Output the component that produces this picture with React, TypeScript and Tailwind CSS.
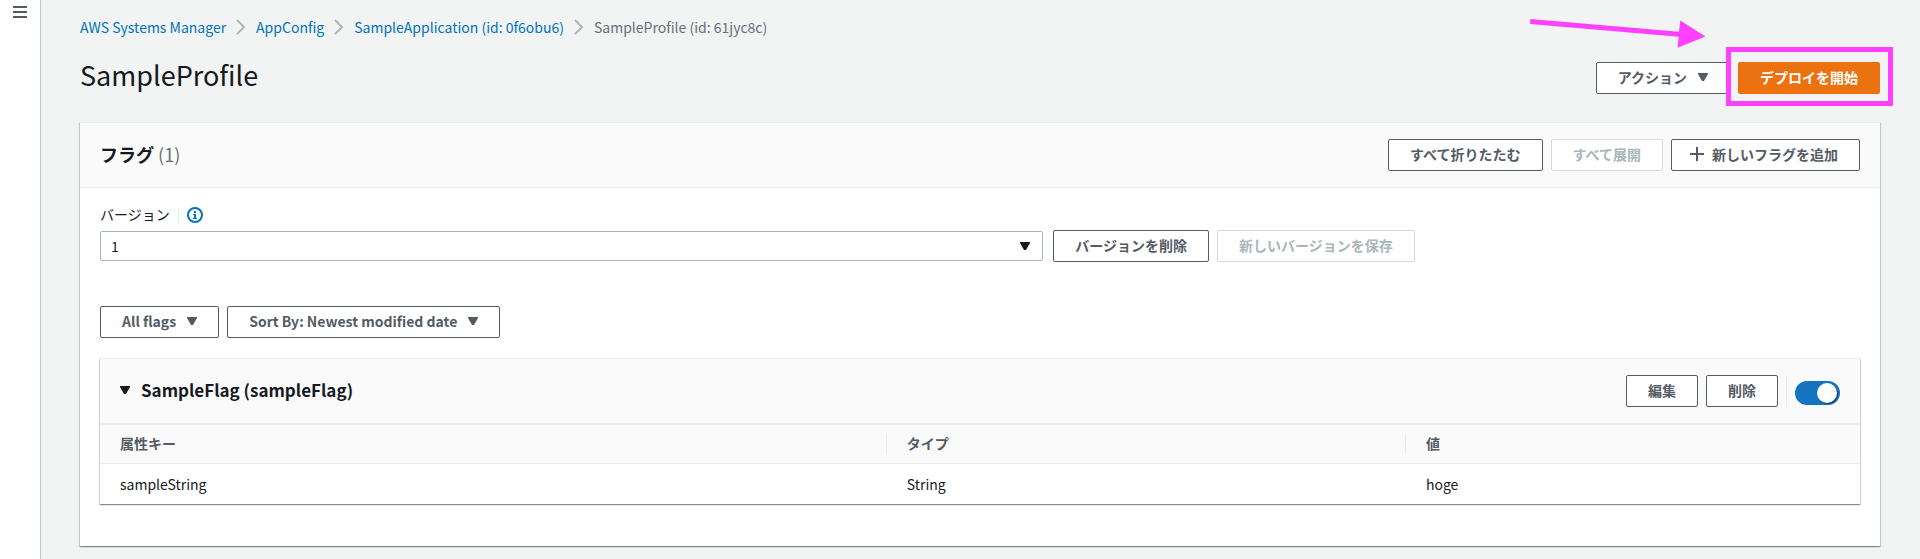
import { useState } from "react";
import type { ButtonHTMLAttributes, ReactNode } from "react";

type ActionButtonProps = ButtonHTMLAttributes<HTMLButtonElement> & {
  children: ReactNode;
  caret?: boolean;
};

function Caret() {
  return (
    <svg className="h-2 w-[10px] shrink-0" viewBox="0 0 10 8" fill="currentColor" aria-hidden="true">
      <path d="M0 0h10v1L6 8H4L0 1z" />
    </svg>
  );
}

function ActionButton({ children, caret, ...rest }: ActionButtonProps) {
  return (
    <button
      type="button"
      className="flex h-8 shrink-0 items-center gap-[11px] rounded-xs border border-[#545b64] bg-white px-[21px] pb-[2px] text-sm font-bold whitespace-nowrap text-[#545b64] disabled:border-[#d5dbdb] disabled:text-[#aab7b8]"
      {...rest}
    >
      {children}
      {caret && <Caret />}
    </button>
  );
}

function Separator() {
  return (
    <svg className="mx-[10px] h-4 w-[10px]" viewBox="0 0 10 16" fill="none" stroke="#aab7b8" strokeWidth="2" aria-hidden="true">
      <path d="M1 1l7 7-7 7" />
    </svg>
  );
}

const crumbs = ["AWS Systems Manager", "AppConfig", "SampleApplication (id: 0f6obu6)"];

const attributes = [{ key: "sampleString", type: "String", value: "hoge" }];

const cardShadow =
  "border-t border-[#eaeded] bg-white shadow-[0_1px_1px_0_rgba(0,28,36,0.3),1px_1px_1px_0_rgba(0,28,36,0.15),-1px_1px_1px_0_rgba(0,28,36,0.15)]";

export default function App() {
  const [enabled, setEnabled] = useState(true);

  return (
    <div className="flex min-h-screen bg-[#f2f3f3] font-['Noto_Sans_CJK_JP',sans-serif] text-sm text-[#16191f]">
      <aside className="w-[41px] shrink-0 border-r border-[#c3c8c8] bg-white">
        <button type="button" aria-label="メニュー" className="flex w-full justify-center pt-[5px] text-[#545b64]">
          <svg className="h-[14px] w-[14px]" viewBox="0 0 14 14" stroke="currentColor" strokeWidth="2" aria-hidden="true">
            <path d="M0 2h14M0 7h14M0 12h14" />
          </svg>
        </button>
      </aside>

      <main className="min-w-0 flex-1 pt-4 pr-10 pl-[39px]">
        <nav aria-label="パンくずリスト" className="flex h-[22px] items-center text-[#687078]">
          {crumbs.map((crumb) => (
            <div key={crumb} className="flex items-center">
              <a href="#" className="text-[#0073bb]">{crumb}</a>
              <Separator />
            </div>
          ))}
          <span>SampleProfile (id: 61jyc8c)</span>
        </nav>

        <header className="flex items-start justify-between pt-5 pb-7">
          <h1 className="text-[27px] leading-[34px]">SampleProfile</h1>
          <div className="flex gap-2 pt-1">
            <ActionButton caret>アクション</ActionButton>
            <div className="relative">
              <button
                type="button"
                className="h-8 rounded-xs bg-[#ec7211] px-[22px] pb-[2px] text-sm font-bold text-white"
              >
                デプロイを開始
              </button>
              <div className="pointer-events-none absolute -top-[15px] -right-[13px] -bottom-3 -left-3 border-[5px] border-[#ff40ff]" />
              <svg
                className="pointer-events-none absolute -top-[46px] right-[170px] h-9 w-[184px]"
                viewBox="0 0 184 36"
                fill="#ff40ff"
                aria-hidden="true"
              >
                <path d="M4.300 3L153 15.800L154.300 4.500L179.500 20.500L151.500 31.800L152.700 20.700L4 8z" />
              </svg>
            </div>
          </div>
        </header>

        <section className={cardShadow}>
          <div className="flex items-start justify-between border-b border-[#eaeded] bg-[#fafafa] px-5 py-4">
            <h2 className="text-lg leading-[30px] font-bold">
              フラグ <span className="font-normal text-[#687078]">(1)</span>
            </h2>
            <div className="flex gap-2">
              <ActionButton>すべて折りたたむ</ActionButton>
              <ActionButton disabled>すべて展開</ActionButton>
              <ActionButton>
                <span className="-ml-[3px] flex items-center gap-2">
                  <svg className="h-[14px] w-[14px]" viewBox="0 0 14 14" stroke="currentColor" strokeWidth="2" aria-hidden="true">
                    <path d="M7 0v14M0 7h14" />
                  </svg>
                  新しいフラグを追加
                </span>
              </ActionButton>
            </div>
          </div>

          <div className="px-5 pt-4 pb-[42px]">
            <div className="flex h-[22px] items-center">
              <label htmlFor="version" className="pb-[2px]">バージョン</label>
              <span className="mx-2 h-4 w-px bg-[#eaeded]" />
              <button type="button" aria-label="情報" className="text-[#0073bb]">
                <svg className="h-4 w-4" viewBox="0 0 16 16" aria-hidden="true">
                  <circle cx="8" cy="8" r="7" fill="none" stroke="currentColor" strokeWidth="2" />
                  <path d="M7 4h2v2H7zM6 7h3v4h1v1H6v-1h1V8H6z" fill="currentColor" />
                </svg>
              </button>
            </div>

            <div className="mt-1 flex items-center gap-2">
              <div className="relative mr-[2px] w-[53.6%]">
                <select
                  id="version"
                  defaultValue="1"
                  className="block h-[30px] w-full appearance-none rounded-xs border border-[#aab7b8] bg-white px-[10px] leading-7"
                >
                  <option value="1">1</option>
                </select>
                <span className="pointer-events-none absolute inset-y-0 right-[13px] flex items-center">
                  <Caret />
                </span>
              </div>
              <ActionButton>バージョンを削除</ActionButton>
              <ActionButton disabled>新しいバージョンを保存</ActionButton>
            </div>

            <div className="mt-11 flex gap-2">
              <ActionButton caret>All flags</ActionButton>
              <ActionButton caret>Sort By: Newest modified date</ActionButton>
            </div>

            <article className={`mt-5 ${cardShadow}`}>
              <div className="flex items-start justify-between border-b border-[#eaeded] bg-[#fafafa] px-5 py-4">
                <button type="button" aria-expanded="true" className="flex items-center gap-[11px] text-[17px] leading-[30px] font-bold">
                  <Caret />
                  SampleFlag (sampleFlag)
                </button>
                <div className="flex gap-2">
                  <ActionButton>編集</ActionButton>
                  <ActionButton>削除</ActionButton>
                  <div className="flex items-center border-l border-[#eaeded] pl-2">
                    <label className="mt-1 flex">
                      <input
                        type="checkbox"
                        role="switch"
                        aria-label="SampleFlag"
                        checked={enabled}
                        onChange={(event) => setEnabled(event.target.checked)}
                        className="peer sr-only"
                      />
                      <span className="flex h-6 w-[45px] items-center rounded-full bg-[#879596] px-[3px] peer-checked:justify-end peer-checked:bg-[#1573bf]">
                        <span className="h-5 w-5 rounded-full bg-white shadow-[1px_1px_1px_rgba(0,0,0,0.45)]" />
                      </span>
                    </label>
                  </div>
                </div>
              </div>

              <table className="w-full table-fixed text-left">
                <thead className="bg-[#fafafa] text-[#545b64]">
                  <tr className="h-[39px] border-y border-[#eaeded]">
                    <th className="w-[44.7%] p-0">
                      <div className="border-r border-[#eaeded] px-5 pb-[2px] leading-[18px]">属性キー</div>
                    </th>
                    <th className="w-[29.5%] p-0">
                      <div className="border-r border-[#eaeded] px-5 pb-[2px] leading-[18px]">タイプ</div>
                    </th>
                    <th className="p-0">
                      <div className="px-5 pb-[2px] leading-[18px]">値</div>
                    </th>
                  </tr>
                </thead>
                <tbody>
                  {attributes.map((attribute) => (
                    <tr key={attribute.key} className="h-10">
                      <td className="px-5">{attribute.key}</td>
                      <td className="px-5">{attribute.type}</td>
                      <td className="px-5">{attribute.value}</td>
                    </tr>
                  ))}
                </tbody>
              </table>
            </article>
          </div>
        </section>
      </main>
    </div>
  );
}
